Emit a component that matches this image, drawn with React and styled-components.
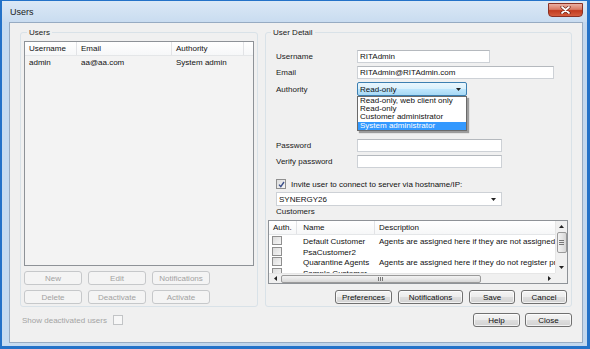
import React from "react";
import styled, { createGlobalStyle } from "styled-components";

const Global = createGlobalStyle`
  html, body { margin: 0; padding: 0; background: #fff; }
  body { font-family: "Liberation Sans", Arial, sans-serif; font-size: 8px; color: #111; }
  * { box-sizing: border-box; }
`;

const Screen = styled.div`
  width: 590px;
  height: 349px;
  border: 3px solid #2472c8;
  border-top-width: 1px;
  border-left-width: 2px;
  background: linear-gradient(90deg, #c7dcf1, #bcd3eb 50%, #c3d8ee);
  display: flex;
  flex-direction: column;
`;

const TitleBar = styled.div`
  height: 21px;
  flex: none;
  display: flex;
  justify-content: space-between;
  align-items: flex-start;
  padding: 0 4px 0 8px;
  background: linear-gradient(#dbe8f6, #c9dcf0);
`;

const Title = styled.span`
  font-size: 9px;
  line-height: 22px;
  color: #1a1a1a;
`;

const CloseBtn = styled.div`
  margin-top: 2px;
  width: 35px;
  height: 14px;
  border: 1px solid #8a3024;
  border-radius: 0 0 4px 4px;
  background: linear-gradient(#eab0a2, #d97a64 45%, #c23a1e 55%, #d55d3e);
  display: flex;
  align-items: center;
  justify-content: center;
`;

const Client = styled.div`
  flex: 1;
  margin: 0 4px 3px 7px;
  background: #f0f0f0;
  border: 1px solid #97abc2;
  padding: 5px 10px 0 10px;
  display: flex;
  flex-direction: column;
`;

const Groups = styled.div`
  display: grid;
  grid-template-columns: 238px 307px;
  gap: 7px;
`;

const Group = styled.fieldset`
  margin: 0;
  min-width: 0;
  height: 279px;
  border: 1px solid #d9e2e8;
  border-radius: 3px;
  padding: ${(p) => p.$pad};
  display: flex;
  flex-direction: column;
`;

const Legend = styled.legend`
  padding: 0 2px;
  margin-left: 3px;
  font-size: 8px;
  line-height: 9px;
  color: #1a1a1a;
`;

/* ---------- Users list ---------- */
const UserTable = styled.div`
  flex: 1;
  border: 1px solid #8e9297;
  background: #f3f3f3;
  display: flex;
  flex-direction: column;
`;

const UserHeader = styled.div`
  display: grid;
  grid-template-columns: 52px 95px 72px 1fr;
  height: 14px;
  background: linear-gradient(#ffffff, #f6f7f8);
  border-bottom: 1px solid #e4e6e8;
`;

const UserRow = styled.div`
  display: grid;
  grid-template-columns: 52px 95px 72px 1fr;
  height: 13px;
  align-items: center;
`;

const HeadCell = styled.div`
  padding-left: 4px;
  line-height: 13px;
  border-right: ${(p) => (p.$last ? "none" : "1px solid #e2e3e6")};
  white-space: nowrap;
  overflow: hidden;
`;

const Cell = styled.div`
  padding-left: ${(p) => p.$pl || 4}px;
  white-space: nowrap;
  overflow: hidden;
`;

const ButtonGrid = styled.div`
  display: grid;
  grid-template-columns: repeat(3, 58px);
  gap: 5px 6px;
  margin-top: 5px;
`;

const Btn = styled.button`
  height: 14px;
  width: ${(p) => p.$w || 58}px;
  padding: 0;
  font-family: "Liberation Sans", Arial, sans-serif;
  font-size: 8px;
  color: #111;
  border: 1px solid #707070;
  border-radius: 3px;
  background: linear-gradient(#f4f4f4 0%, #ececec 50%, #dedede 51%, #d2d2d2 100%);
  box-shadow: inset 0 0 0 1px rgba(255, 255, 255, 0.7);
  &:disabled {
    color: #a2a2a2;
    border-color: #c6c8ca;
    background: #f4f4f4;
    box-shadow: none;
  }
`;

/* ---------- User detail ---------- */
const Form = styled.div`
  margin-left: 8px;
  display: flex;
  flex-direction: column;
`;

const FieldRow = styled.div`
  display: grid;
  grid-template-columns: 81px auto;
  align-items: center;
  margin-top: ${(p) => p.$mt || 0}px;
`;

const Label = styled.span`
  color: #1a1a1a;
`;

const TextInput = styled.input`
  width: ${(p) => p.$w}px;
  height: 13px;
  border: 1px solid #cdd1d6;
  border-top-color: #b5b9be;
  background: #fff;
  padding: 0 2px;
  font-family: "Liberation Sans", Arial, sans-serif;
  font-size: 8px;
  color: #111;
  outline: none;
`;

const SelectWrap = styled.div`
  position: relative;
  width: 110px;
`;

const SelectBox = styled.div`
  height: 14px;
  width: ${(p) => p.$w || 110}px;
  display: flex;
  align-items: center;
  justify-content: space-between;
  padding: 0 5px 0 2px;
  border: 1px solid ${(p) => (p.$active ? "#3c7fb1" : "#cdd1d6")};
  border-radius: ${(p) => (p.$active ? "2px" : "0")};
  background: ${(p) =>
    p.$active
      ? "linear-gradient(#eaf6fd, #d9f0fc 50%, #bee6fd 51%, #a7d9f5)"
      : "#fff"};
  color: #111;
`;

const DropList = styled.ul`
  position: absolute;
  top: 14px;
  left: 0;
  width: 110px;
  margin: 0;
  padding: 0;
  list-style: none;
  background: #fff;
  border: 1px solid #6a6a6a;
  box-shadow: 2px 2px 1px rgba(0, 0, 0, 0.35);
  z-index: 2;
`;

const DropItem = styled.li`
  height: 8.2px;
  line-height: 8.2px;
  padding-left: 2px;
  white-space: nowrap;
  color: ${(p) => (p.$sel ? "#fff" : "#111")};
  background: ${(p) => (p.$sel ? "#3399ff" : "transparent")};
`;

const CheckRow = styled.div`
  display: flex;
  align-items: center;
  gap: 5px;
  margin-top: 11px;
  height: 10px;
`;

const CheckBox = styled.span`
  width: 10px;
  height: 10px;
  flex: none;
  display: inline-flex;
  align-items: center;
  justify-content: center;
  border: 1px solid ${(p) => (p.$dim ? "#c2c4c6" : "#8f8f8f")};
  background: ${(p) =>
    p.$dim ? "#f7f7f7" : "linear-gradient(135deg, #dcdcdc, #f6f6f6)"};
`;

const SubLabel = styled.div`
  margin-top: 1px;
  line-height: 9px;
  color: #1a1a1a;
`;

/* ---------- Customers table ---------- */
const CustTable = styled.div`
  margin-top: 4px;
  height: 64px;
  border: 1px solid #8e9297;
  background: #fff;
  display: grid;
  grid-template-columns: 1fr 12px;
  grid-template-rows: 1fr 10px;
`;

const CustMain = styled.div`
  overflow: hidden;
  min-width: 0;
`;

const CustHeader = styled.div`
  display: grid;
  grid-template-columns: 28px 78px 1fr;
  height: 14px;
  background: linear-gradient(#ffffff, #f6f7f8);
  border-bottom: 1px solid #e4e6e8;
`;

const CustRow = styled.div`
  display: grid;
  grid-template-columns: 28px 78px 1fr;
  height: 10.5px;
  align-items: center;
  margin-top: ${(p) => p.$mt || 0}px;
`;

const VScroll = styled.div`
  background: #f0f0f0;
  border-left: 1px solid #e6e6e6;
  display: flex;
  flex-direction: column;
  align-items: center;
`;

const HScroll = styled.div`
  background: #f0f0f0;
  border-top: 1px solid #e6e6e6;
  display: flex;
  align-items: center;
`;

const Corner = styled.div`
  background: #f0f0f0;
`;

const Arrow = styled.div`
  flex: none;
  width: ${(p) => (p.$h ? 12 : 11)}px;
  height: ${(p) => (p.$h ? 9 : 11)}px;
  display: flex;
  align-items: center;
  justify-content: center;
`;

const Thumb = styled.div`
  flex: none;
  width: ${(p) => (p.$h ? "200px" : "10px")};
  height: ${(p) => (p.$h ? "8px" : "21px")};
  border: 1px solid #9a9a9a;
  border-radius: 2px;
  background: ${(p) =>
    p.$h
      ? "linear-gradient(#f3f3f3, #e6e6e6 50%, #d6d6d6)"
      : "linear-gradient(90deg, #f3f3f3, #e6e6e6 50%, #d6d6d6)"};
  display: flex;
  align-items: center;
  justify-content: center;
`;

const Spacer = styled.div`
  flex: 1;
`;

const ActionRow = styled.div`
  display: flex;
  justify-content: flex-end;
  gap: 6px;
  margin-top: 6px;
  padding-right: 1px;
`;

/* ---------- Footer ---------- */
const Footer = styled.div`
  margin-top: 6px;
  height: 14px;
  display: flex;
  justify-content: space-between;
  align-items: center;
`;

const ShowDeact = styled.div`
  display: flex;
  align-items: center;
  gap: 6px;
  padding-left: 2px;
  color: #a4a4a4;
`;

const FooterBtns = styled.div`
  display: flex;
  gap: 5px;
`;

const Tri = ({ dir }) => {
  const d = {
    down: "M0 0h5l-2.5 3z",
    up: "M0 3h5l-2.5-3z",
    left: "M3 0v5l-3-2.5z",
    right: "M0 0v5l3-2.5z",
  }[dir];
  const horiz = dir === "left" || dir === "right";
  return (
    <svg width={horiz ? 3 : 5} height={horiz ? 5 : 3} viewBox={horiz ? "0 0 3 5" : "0 0 5 3"}>
      <path d={d} fill="#222" />
    </svg>
  );
};

const Grip = ({ h }) =>
  h ? (
    <svg width="6" height="4" viewBox="0 0 6 4">
      <path d="M0.5 0v4M2.5 0v4M4.5 0v4" stroke="#777" strokeWidth="1" />
    </svg>
  ) : (
    <svg width="5" height="5" viewBox="0 0 5 5">
      <path d="M0 0.5h5M0 2.5h5M0 4.5h5" stroke="#777" strokeWidth="1" />
    </svg>
  );

const customers = [
  { name: "Default Customer", desc: "Agents are assigned here if they are not assigned to a customer" },
  { name: "PsaCustomer2", desc: "" },
  { name: "Quarantine Agents", desc: "Agents are assigned here if they do not register properly" },
  { name: "Sample Customer", desc: "" },
];

export default function App() {
  return (
    <>
      <Global />
      <Screen>
        <TitleBar>
          <Title>Users</Title>
          <CloseBtn>
            <svg width="11" height="8" viewBox="0 0 11 8">
              <path d="M2 1l7 6M9 1l-7 6" stroke="#6b2418" strokeWidth="3.2" strokeLinecap="round" />
              <path d="M2 1l7 6M9 1l-7 6" stroke="#fff" strokeWidth="1.7" strokeLinecap="round" />
            </svg>
          </CloseBtn>
        </TitleBar>
        <Client>
          <Groups>
            <Group $pad="4px 3px 2px 3px">
              <Legend>Users</Legend>
              <UserTable>
                <UserHeader>
                  <HeadCell>Username</HeadCell>
                  <HeadCell>Email</HeadCell>
                  <HeadCell>Authority</HeadCell>
                  <HeadCell $last />
                </UserHeader>
                <UserRow>
                  <Cell>admin</Cell>
                  <Cell>aa@aa.com</Cell>
                  <Cell>System admin</Cell>
                  <Cell />
                </UserRow>
              </UserTable>
              <ButtonGrid>
                <Btn disabled>New</Btn>
                <Btn disabled>Edit</Btn>
                <Btn disabled>Notifications</Btn>
                <Btn disabled>Delete</Btn>
                <Btn disabled>Deactivate</Btn>
                <Btn disabled>Activate</Btn>
              </ButtonGrid>
            </Group>

            <Group $pad="13px 3px 2px 2px">
              <Legend>User Detail</Legend>
              <Form>
                <FieldRow>
                  <Label>Username</Label>
                  <TextInput $w={133} readOnly value="RITAdmin" />
                </FieldRow>
                <FieldRow $mt={3}>
                  <Label>Email</Label>
                  <TextInput $w={197} readOnly value="RITAdmin@RITAdmin.com" />
                </FieldRow>
                <FieldRow $mt={3}>
                  <Label>Authority</Label>
                  <SelectWrap>
                    <SelectBox $active>
                      <span>Read-only</span>
                      <Tri dir="down" />
                    </SelectBox>
                    <DropList>
                      <DropItem>Read-only, web client only</DropItem>
                      <DropItem>Read-only</DropItem>
                      <DropItem>Customer administrator</DropItem>
                      <DropItem $sel>System administrator</DropItem>
                    </DropList>
                  </SelectWrap>
                </FieldRow>
                <FieldRow $mt={43}>
                  <Label>Password</Label>
                  <TextInput $w={145} readOnly value="" />
                </FieldRow>
                <FieldRow $mt={3}>
                  <Label>Verify password</Label>
                  <TextInput $w={145} readOnly value="" />
                </FieldRow>
                <CheckRow>
                  <CheckBox>
                    <svg width="7" height="7" viewBox="0 0 7 7">
                      <path d="M1 3.6l1.8 2L6 1" stroke="#3b4f8a" strokeWidth="1.4" fill="none" />
                    </svg>
                  </CheckBox>
                  <span>Invite user to connect to server via hostname/IP:</span>
                </CheckRow>
                <SelectBox $w={226} style={{ marginTop: 3 }}>
                  <span>SYNERGY26</span>
                  <Tri dir="down" />
                </SelectBox>
                <SubLabel>Customers</SubLabel>
              </Form>
              <CustTable>
                <CustMain>
                  <CustHeader>
                    <HeadCell>Auth.</HeadCell>
                    <HeadCell $pl={6}>&nbsp;Name</HeadCell>
                    <HeadCell $last>Description</HeadCell>
                  </CustHeader>
                  {customers.map((c, i) => (
                    <CustRow key={c.name} $mt={i === 0 ? 1.5 : 0}>
                      <Cell $pl={3}>
                        <CheckBox style={{ height: 9 }} />
                      </Cell>
                      <Cell $pl={6}>{c.name}</Cell>
                      <Cell>{c.desc}</Cell>
                    </CustRow>
                  ))}
                </CustMain>
                <VScroll>
                  <Arrow>
                    <Tri dir="up" />
                  </Arrow>
                  <Thumb>
                    <Grip />
                  </Thumb>
                  <Spacer />
                  <Arrow>
                    <Tri dir="down" />
                  </Arrow>
                </VScroll>
                <HScroll>
                  <Arrow $h>
                    <Tri dir="left" />
                  </Arrow>
                  <Thumb $h>
                    <Grip h />
                  </Thumb>
                  <Spacer />
                  <Arrow $h>
                    <Tri dir="right" />
                  </Arrow>
                </HScroll>
                <Corner />
              </CustTable>
              <ActionRow>
                <Btn $w={57}>Preferences</Btn>
                <Btn $w={65}>Notifications</Btn>
                <Btn $w={46}>Save</Btn>
                <Btn $w={46}>Cancel</Btn>
              </ActionRow>
            </Group>
          </Groups>
          <Footer>
            <ShowDeact>
              <span>Show deactivated users</span>
              <CheckBox $dim />
            </ShowDeact>
            <FooterBtns>
              <Btn $w={47}>Help</Btn>
              <Btn $w={47}>Close</Btn>
            </FooterBtns>
          </Footer>
        </Client>
      </Screen>
    </>
  );
}
